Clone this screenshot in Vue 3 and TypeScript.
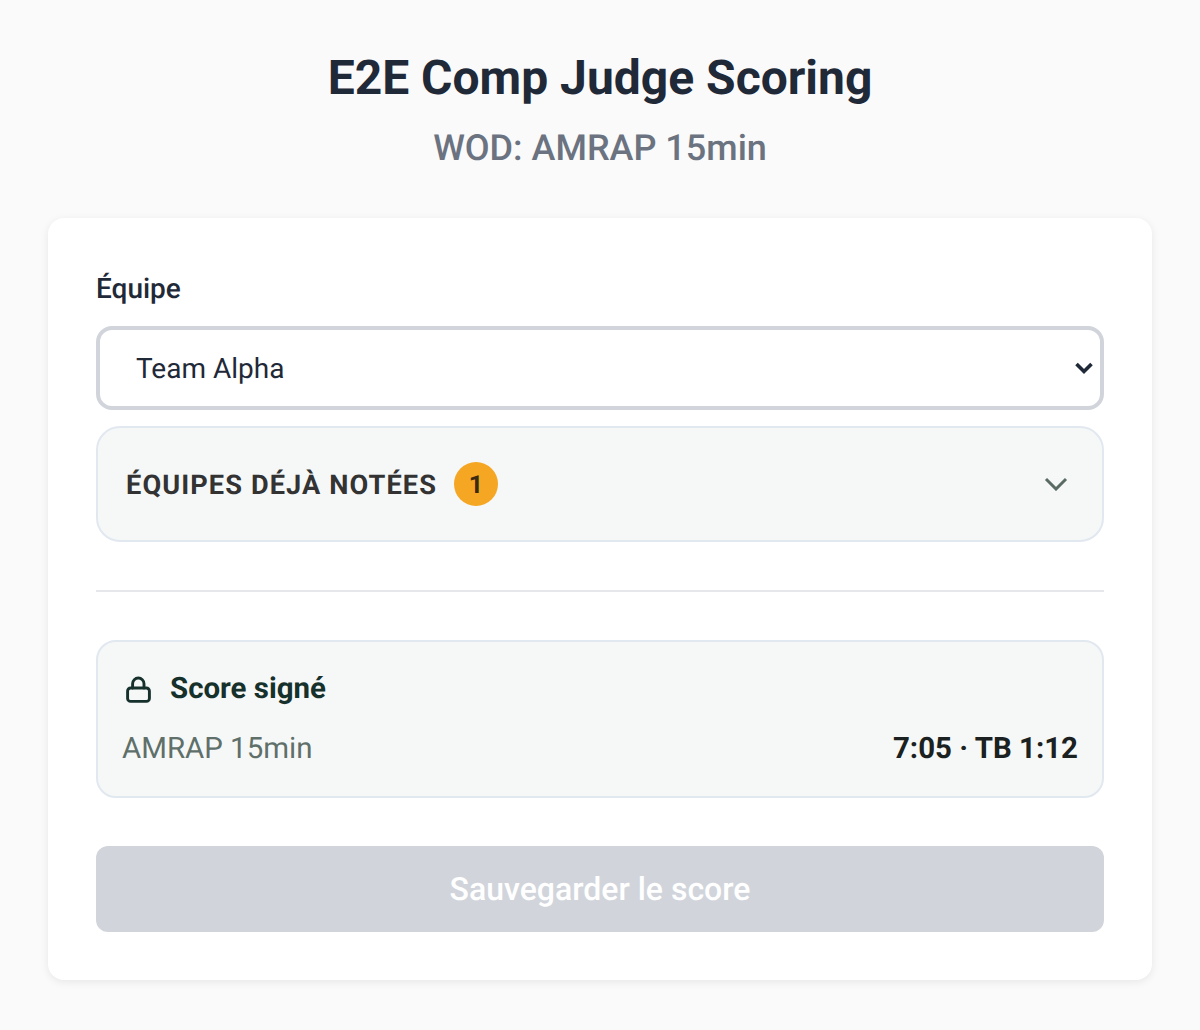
<script setup lang="ts">
const team = 'Team Alpha'
</script>

<template>
  <main class="page">
    <header class="head">
      <h1>E2E Comp Judge Scoring</h1>
      <p>WOD: AMRAP 15min</p>
    </header>
    <section class="card">
      <label class="label" for="team">Équipe</label>
      <div class="select-wrap">
        <select id="team" class="select" :value="team">
          <option>Team Alpha</option>
        </select>
        <svg class="select-icon" width="20" height="14" viewBox="0 0 20 14" fill="none">
          <path d="M2.5 3 L10 10.5 L17.5 3" stroke="#1f2937" stroke-width="3.6" />
        </svg>
      </div>
      <div class="scored">
        <span class="scored-title">ÉQUIPES DÉJÀ NOTÉES</span>
        <span class="badge">1</span>
        <svg class="scored-icon" width="24" height="14" viewBox="0 0 24 14" fill="none">
          <path d="M2 2 L12 12 L22 2" stroke="#5a6b64" stroke-width="3" />
        </svg>
      </div>
      <hr class="divider" />
      <div class="signed">
        <div class="signed-head">
          <svg width="28" height="28" viewBox="0 0 28 28" fill="none" stroke="#16302b" stroke-width="2.9" stroke-linecap="round" stroke-linejoin="round">
            <rect x="3.6" y="12" width="21.8" height="13.4" rx="3" />
            <path d="M8.6 12 V7.7 a5.7 5.7 0 0 1 11.4 0 V12" />
          </svg>
          <span>Score signé</span>
        </div>
        <div class="signed-row">
          <span class="wod">AMRAP 15min</span>
          <strong>7:05 · TB 1:12</strong>
        </div>
      </div>
      <button class="save" disabled>Sauvegarder le score</button>
    </section>
  </main>
</template>

<style scoped>
.page {
  box-sizing: border-box;
  min-height: 1030px;
  padding: 48px 48px 50px;
  background: #fafafa;
  font-family: Roboto, "Liberation Sans", sans-serif;
  text-rendering: geometricPrecision;
}
.head {
  text-align: center;
  margin-bottom: 43px;
}
h1 {
  margin: 0;
  height: 60px;
  font-size: 48px;
  line-height: 60px;
  font-weight: 700;
  color: #1f2937;
}
.head p {
  margin: 0;
  padding-top: 13px;
  font-size: 36px;
  line-height: 54px;
  font-weight: 500;
  color: #6b7280;
}
.card {
  box-sizing: border-box;
  height: 762px;
  padding: 48px;
  background: #fff;
  border-radius: 16px;
  box-shadow: 0 2px 8px rgba(0, 0, 0, 0.08);
  display: flex;
  flex-direction: column;
}
.label {
  padding-top: 1px;
  font-size: 28px;
  line-height: 44px;
  font-weight: 500;
  color: #1f2937;
  margin-bottom: 15px;
}
.select-wrap {
  position: relative;
  height: 84px;
  margin-bottom: 16px;
}
.select {
  appearance: none;
  display: block;
  box-sizing: border-box;
  width: 100%;
  height: 84px;
  padding: 0 32px 0 36px;
  border: 4px solid #d1d5db;
  border-radius: 16px;
  background: #fff;
  font-family: inherit;
  font-size: 28px;
  color: #1f2937;
  text-rendering: geometricPrecision;
}
.select-icon {
  position: absolute;
  right: 10px;
  top: 35px;
  pointer-events: none;
}
.scored {
  box-sizing: border-box;
  height: 116px;
  padding: 0 34px 0 28px;
  display: flex;
  align-items: center;
  background: #f6f8f8;
  border: 2px solid #e2e8f0;
  border-radius: 24px;
}
.scored-title {
  padding-top: 2px;
  font-size: 27.2px;
  font-weight: 700;
  letter-spacing: 1.088px;
  color: #333;
}
.badge {
  box-sizing: border-box;
  width: 44px;
  height: 44px;
  margin-left: 17px;
  padding-top: 2px;
  border-radius: 50%;
  background: #f5a623;
  color: #3a2a12;
  font-size: 25px;
  font-weight: 700;
  display: flex;
  align-items: center;
  justify-content: center;
}
.scored-icon {
  margin-left: auto;
}
.divider {
  width: 100%;
  height: 2px;
  margin: 48px 0;
  border: 0;
  background: #e5e7eb;
}
.signed {
  box-sizing: border-box;
  height: 158px;
  padding: 25px 24px 23px;
  background: #f6f8f8;
  border: 2px solid #e2e8f0;
  border-radius: 20px;
  margin-bottom: 48px;
}
.signed-head {
  display: flex;
  align-items: center;
  gap: 18px;
  font-size: 29.44px;
  line-height: 44px;
  font-weight: 700;
  color: #16302b;
  margin-bottom: 16px;
}
.signed-head svg {
  margin-top: 2px;
  margin-left: 2px;
}
.signed-row {
  display: flex;
  justify-content: space-between;
  align-items: center;
  font-size: 29.44px;
  line-height: 44px;
}
.wod {
  font-weight: 400;
  color: #5f6f69;
}
.signed-row strong {
  font-weight: 700;
  color: #1a2120;
}
.save {
  height: 86px;
  border: 0;
  border-radius: 12px;
  background: #d1d5db;
  color: #fff;
  font-family: inherit;
  font-size: 32px;
  font-weight: 500;
  text-rendering: geometricPrecision;
}
</style>
